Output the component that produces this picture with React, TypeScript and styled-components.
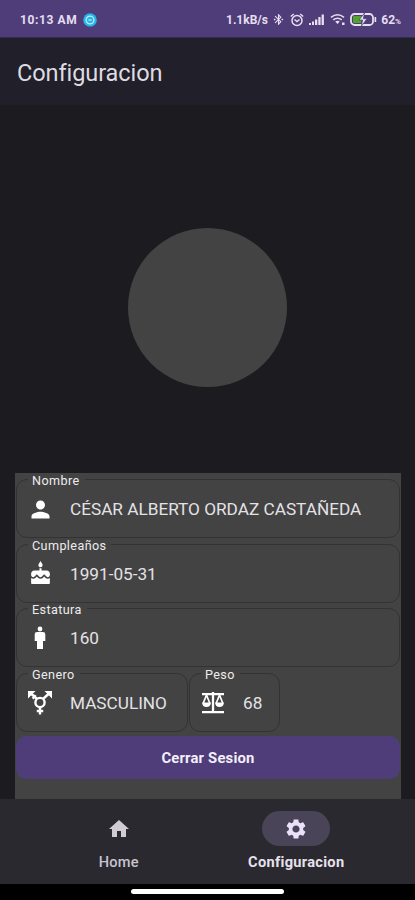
import React from 'react';
import styled, { createGlobalStyle } from 'styled-components';
import { MdPerson, MdCake, MdHome, MdSettings, MdBluetoothConnected } from 'react-icons/md';

const Global = createGlobalStyle`
  * { box-sizing: border-box; }
  body { margin: 0; background: #1c1b1f; font-family: Roboto, sans-serif; color: #e4e2e6; }
`;
const Screen = styled.div`
  width: 415px; height: 900px; display: flex; flex-direction: column; overflow: hidden; background: #1c1b1f;
`;
const StatusBar = styled.header`
  height: 38px; flex: none; background: #4f3d79; display: flex; align-items: center; justify-content: space-between;
  padding: 2px 14px 0 20px; font-size: 12px; font-weight: 700; color: #e5dff0;
  border-bottom: 1px solid #352b4c;
`;
const StatusLeft = styled.div`display: flex; align-items: center; gap: 6px;`;
const Clock = styled.span`letter-spacing: 0.6px; white-space: nowrap;`;
const StatusIcons = styled.div`
  display: flex; align-items: center; width: 175px; justify-content: space-between; white-space: nowrap;
  svg { flex: none; }
`;
const Percent = styled.small`font-size: 8px;`;
const AppBar = styled.div`
  height: 67px; flex: none; background: #211f29; display: flex; align-items: center; padding: 3px 17px 0;
`;
const Title = styled.h1`margin: 0; font-size: 23.5px; font-weight: 400; line-height: 28px; letter-spacing: -0.08px; color: #dedce0;`;
const Content = styled.main`flex: 1; min-height: 0; display: flex; flex-direction: column; padding: 0 14px 0 15px;`;
const AvatarArea = styled.div`height: 368px; flex: none; padding: 123px 0 0 113px;`;
const Avatar = styled.div`width: 159px; height: 159px; border-radius: 50%; background: #434343;`;
const Card = styled.section`flex: 1; min-height: 0; background: #434343; padding: 0 1px;`;
const FieldRow = styled.div`display: flex; gap: 1px; height: 64.7px;`;
const Field = styled.fieldset<{ $width: number }>`
  width: ${p => p.$width}px; height: 65px; min-width: 0; margin: 0; padding: 0 0 0 12px;
  border: 1px solid #333; border-radius: 11px;
`;
const Legend = styled.legend`
  height: 13px; margin-left: -1px; padding: 0 5px 0 4px; font-size: 12.6px; line-height: 16px; letter-spacing: 0.4px; color: #ececec;
`;
const FieldBody = styled.div`
  display: flex; align-items: center; height: 46px; gap: 17px; font-size: 17.2px; white-space: nowrap;
`;
const IconSlot = styled.span`
  width: 24px; height: 24px; margin-left: -1px; margin-right: 1px; flex: none; display: flex; align-items: center; justify-content: center; color: #fff;
  svg { flex: none; }
`;
const Logout = styled.button`
  display: block; width: 100%; height: 43px; margin: 4px 0 0; border: 0; border-radius: 10px;
  background: #4f3d79; color: #f4effa; font: 700 14.8px/43px Roboto, sans-serif; letter-spacing: 0.2px; padding: 1px 0 0;
`;
const Nav = styled.nav`height: 85px; flex: none; background: #2a2930; display: flex; padding: 12px 30px 0;`;
const NavItem = styled.div<{ $active?: boolean }>`
  flex: 1; display: flex; flex-direction: column; align-items: center; gap: 7px;
  font-size: 14.6px; line-height: 18px; letter-spacing: ${p => (p.$active ? '0.3px' : '0.15px')};
  font-weight: ${p => (p.$active ? 700 : 500)}; color: ${p => (p.$active ? '#e8e2ec' : '#c8c4ce')};
`;
const Indicator = styled.div<{ $active?: boolean }>`
  width: 68px; height: 35px; border-radius: 18px; display: flex; align-items: center; justify-content: center;
  background: ${p => (p.$active ? '#494458' : 'transparent')}; color: ${p => (p.$active ? '#eae1fa' : '#d0ccd4')};
`;
const GestureBar = styled.footer`height: 16px; flex: none; background: #000; display: flex; justify-content: center; padding-top: 5px;`;
const Handle = styled.div`width: 153px; height: 5px; border-radius: 3px; background: #fff;`;

const AppBadge = () => (
  <svg width="14" height="14" viewBox="0 0 14 14">
    <circle cx="7" cy="7" r="6.800" fill="#26b4e6" />
    <circle cx="7" cy="7" r="3.900" fill="none" stroke="#b9edff" strokeWidth="1.300" />
    <path d="M5.300 7h3.400" stroke="#b9edff" strokeWidth="1.200" />
  </svg>
);
const Alarm = () => (
  <svg width="14" height="14" viewBox="0 0 14 14" fill="none" stroke="currentColor" strokeWidth="1.500">
    <circle cx="7" cy="7.500" r="5" />
    <path d="m.8 3.500 3-2.500M13.200 3.500l-3-2.500M4.500 6.500 7 8.500l2.500-2" />
  </svg>
);
const Signal = () => (
  <svg width="17" height="13" viewBox="0 0 17 13" fill="currentColor">
    <path d="M1 10h2v2H1zM4 8.500h2V12H4zM7 6.500h2.300V12H7zM10.300 4h2.300v8h-2.300zM13.600 1.500h2.300V12h-2.300z" />
  </svg>
);
const Wifi = () => (
  <svg width="16" height="13" viewBox="0 0 16 13" fill="none" stroke="currentColor" strokeWidth="1.700">
    <path d="M1 4.300Q7.500-.8 14 4.300M3.300 6.900q4.200-3.300 8.400 0" />
    <path d="M5.200 8.500q2.300-1.600 4.600 0L7.500 11zM12 9.500h2.500V12H12z" fill="currentColor" stroke="none" />
  </svg>
);
const Battery = () => (
  <svg width="27" height="13" viewBox="0 0 27 13">
    <rect x="1" y="1" width="22" height="11" rx="3.500" fill="none" stroke="currentColor" strokeWidth="1.800" />
    <path d="M24.500 4h1.700v5h-1.700z" fill="currentColor" />
    <rect x="3" y="3" width="8.500" height="7" rx="1" fill="#4fa52c" />
    <path d="M14.500 0 9 7h3.500l-1 6L17 5.700h-3.600z" fill="currentColor" stroke="#4f3d79" strokeWidth=".7" />
  </svg>
);
const PersonStanding = () => (
  <svg width="24" height="24" viewBox="0 0 24 24" fill="currentColor">
    <circle cx="12" cy="3" r="2.400" />
    <path d="M9 6h6q2.300 0 2.300 2.300V15H15v8H9v-8H6.700V8.300Q6.700 6 9 6z" />
  </svg>
);
const Gender = () => (
  <svg width="24" height="24" viewBox="0 0 24 24" fill="none" stroke="currentColor" strokeWidth="2.400">
    <circle cx="12" cy="11.500" r="4.600" />
    <path d="M9 8 3 2.500M15 8l6-5.500M12 16v7.500M8.800 20h6.400M4.600 7.600l3.200-3.400" />
    <path d="M0 0h7.500L0 7.500zM24 0h-7.500L24 7.500z" fill="currentColor" stroke="none" />
  </svg>
);
const Scale = () => (
  <svg width="24" height="24" viewBox="0 0 24 24" fill="none" stroke="currentColor" strokeWidth="2.300">
    <path d="M1 3.200h22M12 1v19M1 21.200h22" />
    <path d="M5.500 4 2.300 12M5.500 4l3.200 8M18.500 4l-3.200 8M18.500 4l3.200 8" strokeWidth="1.700" />
    <path d="M1 11.500h9q-.5 4.500-4.500 4.500T1 11.500zM14 11.500h9q-.5 4.500-4.500 4.500T14 11.500z" fill="currentColor" stroke="none" />
  </svg>
);

type InfoProps = { label: string; value: string; width: number; icon: React.ReactNode };
const Info = ({ label, value, width, icon }: InfoProps) => (
  <Field $width={width}><Legend>{label}</Legend><FieldBody><IconSlot>{icon}</IconSlot><span>{value}</span></FieldBody></Field>
);

export default function App() {
  return (
    <><Global /><Screen>
      <StatusBar>
        <StatusLeft><Clock>10:13 AM</Clock><AppBadge /></StatusLeft>
        <StatusIcons>
          <span>1.1kB/s</span><MdBluetoothConnected size={13} stroke="currentColor" /><Alarm /><Signal /><Wifi /><Battery />
          <span>62<Percent>%</Percent></span>
        </StatusIcons>
      </StatusBar>
      <AppBar><Title>Configuracion</Title></AppBar>
      <Content>
        <AvatarArea><Avatar /></AvatarArea>
        <Card>
          <FieldRow><Info label="Nombre" value="CÉSAR ALBERTO ORDAZ CASTAÑEDA" width={384} icon={<MdPerson size={27} />} /></FieldRow>
          <FieldRow><Info label="Cumpleaños" value="1991-05-31" width={384} icon={<MdCake size={25} />} /></FieldRow>
          <FieldRow><Info label="Estatura" value="160" width={384} icon={<PersonStanding />} /></FieldRow>
          <FieldRow>
            <Info label="Genero" value="MASCULINO" width={172} icon={<Gender />} />
            <Info label="Peso" value="68" width={91} icon={<Scale />} />
          </FieldRow>
          <Logout>Cerrar Sesion</Logout>
        </Card>
      </Content>
      <Nav>
        <NavItem><Indicator><MdHome size={24} /></Indicator>Home</NavItem>
        <NavItem $active><Indicator $active><MdSettings size={24} /></Indicator>Configuracion</NavItem>
      </Nav>
      <GestureBar><Handle /></GestureBar>
    </Screen></>
  );
}
